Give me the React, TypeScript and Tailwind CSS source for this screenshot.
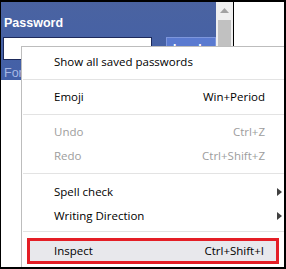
import React from "react";

const font = { fontFamily: '"Segoe UI", "Open Sans", "Noto Sans", sans-serif' };

function Item({ label, shortcut, disabled, arrow }: { label: string; shortcut?: string; disabled?: boolean; arrow?: boolean }) {
  return (
    <div className={`flex items-center h-6 pl-[32px] text-[11.5px] ${disabled ? "text-[#9d9d9d]" : "text-black"}`}>
      <span className="flex-1">{label}</span>
      {shortcut && <span>{shortcut}</span>}
      <div className="w-[33px] flex items-center pl-[12px]">
        {arrow && (
          <svg width="5" height="8" viewBox="0 0 5 8">
            <path d="M0 0 L5 4 L0 8 Z" fill="#404040" />
          </svg>
        )}
      </div>
    </div>
  );
}

function Sep({ h, top }: { h: string; top: string }) {
  return (
    <div className={`${h} ${top} ml-[1px]`}>
      <div className="h-px bg-[#e3e3e3]" />
    </div>
  );
}

export default function App() {
  return (
    <div className="relative w-[286px] h-[269px] overflow-hidden bg-white border-l border-t-2 border-r-2 border-b-2 border-black">
      <div className="flex h-[44px]">
        <div className="w-[215px] h-[78px] bg-gradient-to-b from-[#4a63a1] to-[#4360a8] pl-[2px] pt-[13px]" style={{ fontFamily: '"Liberation Sans", Arial, sans-serif' }}>
          <div className="text-white text-[12.5px] leading-[16px] pl-[1px] font-semibold">Password</div>
          <div className="flex mt-[6px] items-start">
            <div className="w-[149px] h-[23px] bg-white border border-[#1d2a5b]" />
            <div className="ml-[14px] w-[50px] h-[22px] bg-[#5a7ad0] border border-[#7d96dc] text-white text-[12px] font-bold pl-[6px] pt-[2px]">Log In</div>
          </div>
          <div className="text-[#a7b8e4] text-[12.5px] mt-[4px] pl-[1px]">Forgot</div>
        </div>
        <div className="w-[17px] h-[44px] bg-[#f0f0f0] flex flex-col items-center">
          <svg width="9" height="5" viewBox="0 0 9 5" className="mt-[6px]">
            <path d="M0 5 L4.5 0 L9 5 Z" fill="#a3a3a3" />
          </svg>
          <div className="mt-[7px] w-[13px] flex-1 bg-[#c1c1c1]" />
        </div>
        <div className="w-px h-[44px] bg-black" />
        <div className="flex-1" />
      </div>

      <div className="absolute left-[20px] top-[44px] w-[278px] h-[240px] bg-white border border-[#bdbdbd] pt-[3px]" style={font}>
        <Item label="Show all saved passwords" />
        <Sep h="h-[11px]" top="pt-[5px]" />
        <Item label="Emoji" shortcut="Win+Period" />
        <Sep h="h-[11px]" top="pt-[5px]" />
        <Item label="Undo" shortcut="Ctrl+Z" disabled />
        <Item label="Redo" shortcut="Ctrl+Shift+Z" disabled />
        <Sep h="h-[12px]" top="pt-[5px]" />
        <Item label="Spell check" arrow />
        <Item label="Writing Direction" arrow />
        <Sep h="h-[10px]" top="pt-[3px]" />
        <div className="ml-[5px] w-[252px] h-[26px] border-[3px] border-[#e41e26] bg-[#e8e8ec] flex items-center pl-[24px] pr-[12px] text-[11.5px] text-black">
          <span className="flex-1">Inspect</span>
          <span>Ctrl+Shift+I</span>
        </div>
      </div>
    </div>
  );
}
